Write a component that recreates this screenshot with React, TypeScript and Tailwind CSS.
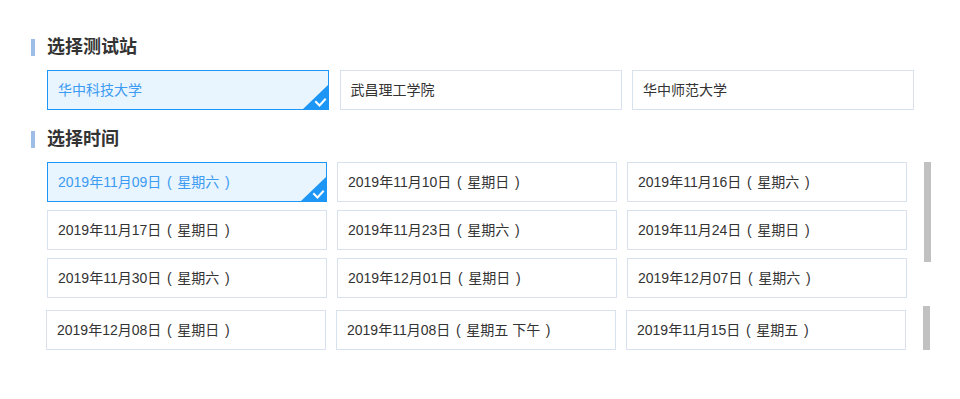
import React from "react";

const font = { fontFamily: '"Liberation Sans", Arial, "Noto Sans CJK SC", sans-serif' };

function Check() {
  return (
    <div className="pointer-events-none absolute bottom-0 right-0 h-[24px] w-[25px]">
      <svg width="25" height="24" viewBox="0 0 25 24" className="block">
        <polygon points="25,0 25,24 0,24" fill="#1e96f5" />
        <polyline points="13,17 16.5,20.5 22,14.5" fill="none" stroke="#ffffff" strokeWidth="2" strokeLinecap="square" />
      </svg>
    </div>
  );
}

function Label({ text }: { text: string }) {
  const m = text.match(/^(.*)（(.*)）$/);
  if (!m) return <span className="whitespace-pre">{text}</span>;
  return (
    <span className="whitespace-pre">
      {m[1]}
      <span className="inline-block w-[16px] text-center">(</span>
      {m[2]}
      <span className="inline-block w-[16px] text-center">)</span>
    </span>
  );
}

function Box({ label, selected, w }: { label: string; selected?: boolean; w: string }) {
  return (
    <div
      className={
        "relative flex h-[40px] shrink-0 items-center border pl-[10px] text-[14px] " +
        w +
        (selected
          ? " border-[#1e96f5] bg-[#e8f4fe] text-[#3c9bf2]"
          : " border-[#d8e2ee] bg-white text-[#333333]")
      }
    >
      <Label text={label} />
      {selected && <Check />}
    </div>
  );
}

function Heading({ text }: { text: string }) {
  return (
    <div className="flex h-[22px] items-center gap-[12px]">
      <div className="h-[17px] w-[4px] bg-[#9dbde6]" />
      <div className="text-[18px] font-bold leading-[22px] text-[#333333]">{text}</div>
    </div>
  );
}

const dates1 = [
  ["2019年11月09日（星期六）", true],
  ["2019年11月10日（星期日）", false],
  ["2019年11月16日（星期六）", false],
  ["2019年11月17日（星期日）", false],
  ["2019年11月23日（星期六）", false],
  ["2019年11月24日（星期日）", false],
  ["2019年11月30日（星期六）", false],
  ["2019年12月01日（星期日）", false],
  ["2019年12月07日（星期六）", false],
] as const;

const dates2 = ["2019年12月08日（星期日）", "2019年11月08日（星期五 下午）", "2019年11月15日（星期五）"];

export default function App() {
  return (
    <div className="h-[399px] w-[960px] overflow-hidden bg-white pl-[31px] pt-[36px]" style={font}>
      <Heading text="选择测试站" />
      <div className="ml-[16px] mt-[12px] flex gap-[10.5px]">
        <Box label="华中科技大学" selected w="w-[282px]" />
        <Box label="武昌理工学院" w="w-[282px]" />
        <Box label="华中师范大学" w="w-[282px]" />
      </div>
      <div className="mt-[18px]">
        <Heading text="选择时间" />
      </div>
      <div className="ml-[16px] mt-[12px] flex gap-[17px]">
        <div className="grid grid-cols-[280px_280px_280px] gap-x-[10px] gap-y-[8px]">
          {dates1.map(([d, s]) => (
            <Box key={d} label={d} selected={s} w="w-[280px]" />
          ))}
        </div>
        <div className="h-[100px] w-[7px] bg-[#c1c1c1]" />
      </div>
      <div className="ml-[15px] mt-[8px] flex gap-[17px]">
        <div className="flex gap-[10px] pt-[4px]">
          {dates2.map((d) => (
            <Box key={d} label={d} w="w-[280px]" />
          ))}
        </div>
        <div className="h-[44px] w-[7px] bg-[#c1c1c1]" />
      </div>
    </div>
  );
}
